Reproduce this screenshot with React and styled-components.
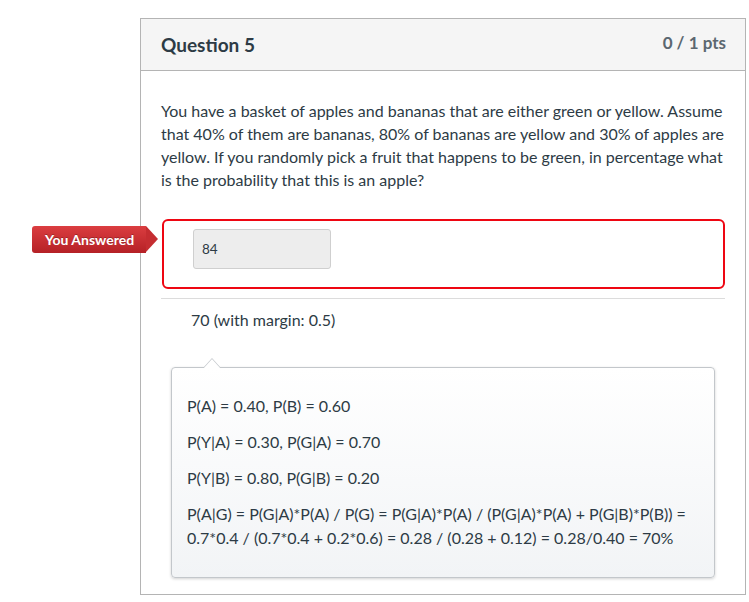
import React from 'react';
import styled, { createGlobalStyle } from 'styled-components';

const GlobalStyle = createGlobalStyle`
  body {
    margin: 0;
    background: #ffffff;
    font-family: Lato, "Open Sans", sans-serif;
    color: #2d3b45;
  }
`;

const Page = styled.div`
  position: relative;
  padding: 18px 0 0 140px;
`;

const Card = styled.div`
  width: 606px;
  box-sizing: border-box;
  border: 1px solid #b4b4b4;
  background: #fff;
`;

const Header = styled.div`
  height: 52px;
  box-sizing: border-box;
  display: flex;
  justify-content: space-between;
  align-items: center;
  padding: 0 19px 0 20px;
  background: #f5f5f5;
  border-bottom: 1px solid #b4b4b4;
`;

const Title = styled.h2`
  margin: 0;
  font-size: 19px;
  font-weight: 700;
  color: #2d3b45;
  line-height: 1;
`;

const Points = styled.span`
  font-size: 17px;
  font-weight: 700;
  color: #5b6770;
  margin-top: -5px;
`;

const Body = styled.div`
  padding: 28px 20px 16px 20px;
`;

const QuestionText = styled.p`
  margin: 0 0 28px;
  font-size: 16px;
  line-height: 23px;
  color: #2d3b45;
`;

const AnswerBox = styled.div`
  margin-left: 1px;
  width: 563px;
  height: 70px;
  box-sizing: border-box;
  border: 2px solid #ee0612;
  border-radius: 6px;
  padding: 8px 0 0 29px;
`;

const AnswerInput = styled.div`
  width: 138px;
  height: 40px;
  box-sizing: border-box;
  background: #ededed;
  border: 1px solid #cfcfcf;
  border-radius: 3px;
  padding-left: 8px;
  display: flex;
  align-items: center;
  font-size: 13.5px;
  color: #2d3b45;
`;

const Divider = styled.hr`
  margin: 9px 0 0;
  border: 0;
  border-top: 1px solid #dcdcdc;
`;

const CorrectAnswer = styled.div`
  padding: 9px 0 0 30px;
  font-size: 16px;
  line-height: 23px;
  color: #2d3b45;
`;

const Comment = styled.div`
  position: relative;
  margin: 36px 10px 0 10px;
  padding: 26px 15px 27px 15px;
  border: 1px solid #c3c7cb;
  border-radius: 4px;
  background: linear-gradient(#ffffff, #f2f4f6);
  box-shadow: 0 1px 3px rgba(0, 0, 0, 0.18);

  &::before,
  &::after {
    content: '';
    position: absolute;
    left: 31px;
    border: 9px solid transparent;
    border-top: 0;
  }
  &::before {
    top: -10px;
    border-bottom: 10px solid #c3c7cb;
  }
  &::after {
    top: -9px;
    border-bottom: 10px solid #ffffff;
  }
`;

const CommentLine = styled.p`
  margin: 0 0 12px;
  font-size: 16px;
  line-height: 24px;
  color: #2d3b45;

  &:last-child {
    margin-bottom: 0;
  }
`;

const AnsweredTag = styled.div`
  position: absolute;
  left: 32px;
  top: 226px;
  height: 27px;
  width: 114px;
  box-sizing: border-box;
  padding-left: 13px;
  display: flex;
  align-items: center;
  background: linear-gradient(#db3d40, #b52126);
  border-radius: 3px 0 0 3px;
  color: #fff;
  font-size: 14px;
  font-weight: 700;
  text-shadow: 0 -1px 0 rgba(0, 0, 0, 0.25);

  &::after {
    content: '';
    position: absolute;
    right: -12px;
    top: 0;
    border-left: 12px solid #c52d31;
    border-top: 13.5px solid transparent;
    border-bottom: 13.5px solid transparent;
  }
`;

export default function App() {
  return (
    <>
      <GlobalStyle />
      <Page>
        <AnsweredTag>You Answered</AnsweredTag>
        <Card>
          <Header>
            <Title>Question 5</Title>
            <Points>0 / 1 pts</Points>
          </Header>
          <Body>
            <QuestionText>
              You have a basket of apples and bananas that are either green or yellow. Assume
              that 40% of them are bananas, 80% of bananas are yellow and 30% of apples are
              yellow. If you randomly pick a fruit that happens to be green, in percentage what
              is the probability that this is an apple?
            </QuestionText>
            <AnswerBox>
              <AnswerInput>84</AnswerInput>
            </AnswerBox>
            <Divider />
            <CorrectAnswer>70 (with margin: 0.5)</CorrectAnswer>
            <Comment>
              <CommentLine>P(A) = 0.40, P(B) = 0.60</CommentLine>
              <CommentLine>P(Y|A) = 0.30, P(G|A) = 0.70</CommentLine>
              <CommentLine>P(Y|B) = 0.80, P(G|B) = 0.20</CommentLine>
              <CommentLine>
                P(A|G) = P(G|A)*P(A) / P(G) = P(G|A)*P(A) / (P(G|A)*P(A) + P(G|B)*P(B)) =
                0.7*0.4 / (0.7*0.4 + 0.2*0.6) = 0.28 / (0.28 + 0.12) = 0.28/0.40 = 70%
              </CommentLine>
            </Comment>
          </Body>
        </Card>
      </Page>
    </>
  );
}
